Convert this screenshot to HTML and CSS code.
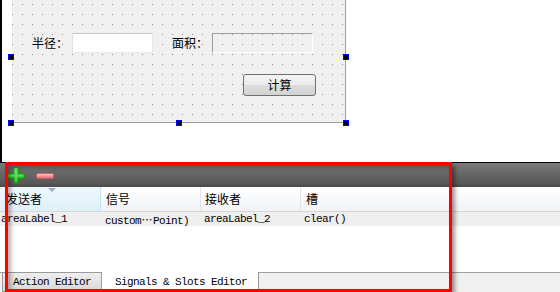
FILE: index.html
```html
<!DOCTYPE html>
<html>
<head>
<meta charset="utf-8">
<link rel="stylesheet" href="styles.css">
</head>
<body>
<div class="designer">
  <div class="edge"></div>
  <div class="canvas">
    <div class="form">
      <div class="row">
        <span class="lbl">半径：</span>
        <div class="edit"></div>
        <span class="lbl lbl2">面积：</span>
        <div class="result"></div>
      </div>
      <div class="btnrow"><div class="btn">计算</div></div>
    </div>
    <span class="handle h-ml"></span>
    <span class="handle h-mr"></span>
    <span class="handle h-bl"></span>
    <span class="handle h-bm"></span>
    <span class="handle h-br"></span>
  </div>
</div>
<div class="panel">
  <div class="toolbar">
    <svg class="ico-plus" width="18" height="17" viewBox="0 0 18 17">
      <defs>
        <linearGradient id="gp" x1="0" y1="0" x2="0" y2="1">
          <stop offset="0" stop-color="#5fe05f"/>
          <stop offset="0.5" stop-color="#2fc42f"/>
          <stop offset="1" stop-color="#1c9a1c"/>
        </linearGradient>
      </defs>
      <path d="M6.5 0.5h5v6h6v5h-6v5h-5v-5h-6v-5h6z" fill="url(#gp)" stroke="#1f8f1f" stroke-width="0.8"/>
      <path d="M8 2h2v6h6v1.5h-6v5h-2v-5h-6v-1.5h6z" fill="#7ff07f" opacity="0.55"/>
    </svg>
    <svg class="ico-minus" width="18" height="6" viewBox="0 0 18 6">
      <defs>
        <linearGradient id="gm" x1="0" y1="0" x2="0" y2="1">
          <stop offset="0" stop-color="#ffd0d0"/>
          <stop offset="0.5" stop-color="#f49494"/>
          <stop offset="1" stop-color="#e06a6a"/>
        </linearGradient>
      </defs>
      <rect x="0.5" y="0.5" width="17" height="5" rx="1.5" fill="url(#gm)" stroke="#cf5a5a" stroke-width="0.8"/>
    </svg>
  </div>
  <div class="thead">
    <div class="th c1">发送者<span class="sort"></span></div>
    <div class="th c2">信号</div>
    <div class="th c3">接收者</div>
    <div class="th c4">槽</div>
  </div>
  <div class="tr">
    <div class="td c1">areaLabel_1</div>
    <div class="td c2">custom<span class="ell">⋯</span>Point)</div>
    <div class="td c3">areaLabel_2</div>
    <div class="td c4">clear()</div>
  </div>
  <div class="tfill"></div>
  <div class="tabs">
    <div class="tab-lead"></div>
    <div class="tab">Action Editor</div>
    <div class="tab active">Signals &amp; Slots Editor</div>
    <div class="tab-rest"></div>
  </div>
  <div class="annot"></div>
</div>
</body>
</html>
```
FILE: styles.css
```css
* { box-sizing: border-box; margin: 0; padding: 0; }
body {
  margin: 0;
  width: 560px;
  height: 292px;
  overflow: hidden;
  background: #fff;
  font-family: "Noto Sans CJK SC", "Noto Sans", sans-serif;
  font-size: 12px;
  color: #000;
}
.designer { display: flex; height: 162px; }
.edge { width: 2px; background: #000; }
.canvas { position: relative; flex: 1; padding-left: 10px; }
.form {
  width: 334px;
  height: 123px;
  border-right: 1px solid #a0a0a0;
  border-bottom: 1px solid #a0a0a0;
  background-color: #8c8c8c;
  background-image:
    linear-gradient(90deg, transparent 1px, #f0f0f0 1px),
    linear-gradient(transparent 1px, #f0f0f0 1px);
  background-size: 10px 10px;
  background-position: 0 4px;
  padding: 33px 0 0 20px;
}
.row { display: flex; align-items: center; height: 20px; }
.lbl { width: 40px; line-height: 20px; }
.lbl2 { margin-left: 19px; }
.edit {
  width: 81px;
  height: 20px;
  background: #fff;
  border: 1px solid #e3e9ef;
  border-top-color: #c4c6cc;
  border-left-color: #dde1e6;
}
.result {
  width: 101px;
  height: 20px;
  border: 1px solid #fff;
  border-top-color: #a0a0a0;
  border-left-color: #a0a0a0;
}
.btnrow { margin-top: 21px; padding-left: 211px; }
.btn {
  width: 73px;
  height: 22px;
  border: 1px solid #707070;
  border-radius: 3px;
  background: linear-gradient(#f4f4f4, #ebebeb 50%, #dddddd 51%, #d2d2d2);
  text-align: center;
  line-height: 20px;
}
.handle {
  position: absolute;
  width: 6px;
  height: 6px;
  background: #000;
  border: 1px solid #0000ff;
}
.h-ml { left: 6px; top: 54px; }
.h-mr { left: 341px; top: 54px; }
.h-bl { left: 6px; top: 120px; }
.h-bm { left: 174px; top: 120px; }
.h-br { left: 341px; top: 120px; }

.panel { position: relative; height: 130px; border-top: 1px solid #000; }
.toolbar {
  height: 24px;
  display: flex;
  align-items: center;
  gap: 11px;
  padding-left: 7px;
  background: linear-gradient(#7a7a7a, #686868 40%, #585858 85%, #4a4a4a);
}
.ico-minus { margin-top: 1px; }
.thead {
  display: flex;
  height: 25px;
  border-bottom: 1px solid #d5d5d5;
  background: linear-gradient(#ffffff, #f8f9fa 50%, #f1f2f4);
}
.th {
  position: relative;
  width: 100px;
  padding-left: 5px;
  line-height: 24px;
  border-right: 1px solid #e2e3e6;
}
.th.c1 {
  width: 101px;
  padding-left: 6px;
  background: linear-gradient(#eef8fd, #e0f1fa);
  border-right-color: #c4e1f2;
}
.th.c3 { padding-left: 4px; }
.th.c4 { flex: 1; border-right: none; }
.sort {
  position: absolute;
  left: 48px;
  top: 1px;
  width: 0;
  height: 0;
  border-left: 4px solid transparent;
  border-right: 4px solid transparent;
  border-top: 4px solid #97aec4;
}
.tr {
  display: flex;
  height: 14px;
  background: #efefef;
  font-family: "Liberation Mono", "Noto Sans CJK SC", monospace;
  font-size: 11px;
  letter-spacing: -0.6px;
  line-height: 14px;
  white-space: nowrap;
}
.td { width: 100px; }
.td.c1 { width: 101px; padding-left: 1px; }
.td.c2 { padding-left: 4px; }
.td.c3 { padding-left: 3px; }
.td.c4 { flex: 1; padding-left: 3px; }
.ell {
  display: inline-block;
  width: 12px;
  text-align: center;
  letter-spacing: 0;
  font-family: "Noto Sans CJK SC", "DejaVu Sans", sans-serif;
}
.tfill { height: 46px; background: #fff; }
.tabs {
  display: flex;
  height: 20px;
  background: #f0f0f0;
  font-family: "Liberation Mono", monospace;
  font-size: 11px;
  letter-spacing: -0.6px;
  white-space: nowrap;
}
.tab-lead { width: 2px; border-top: 1px solid #a0a0a0; }
.tab {
  width: 100px;
  padding-left: 10px;
  line-height: 18px;
  border: 1px solid #9a9a9a;
  background: linear-gradient(#eeeeee, #e2e2e2 60%, #d9d9d9);
}
.tab.active {
  width: 157px;
  padding-left: 13px;
  padding-top: 1px;
  border: none;
  border-right: 1px solid #9a9a9a;
  background: #fff;
}
.tab-rest { flex: 1; border-top: 1px solid #a0a0a0; }
.annot {
  position: absolute;
  left: 5px;
  top: -1px;
  width: 447px;
  height: 130px;
  border: 3px solid #ff0000;
  box-shadow: 3px 3px 4px rgba(0, 0, 0, 0.4), inset 3px 3px 4px rgba(0, 0, 0, 0.3);
}
```
